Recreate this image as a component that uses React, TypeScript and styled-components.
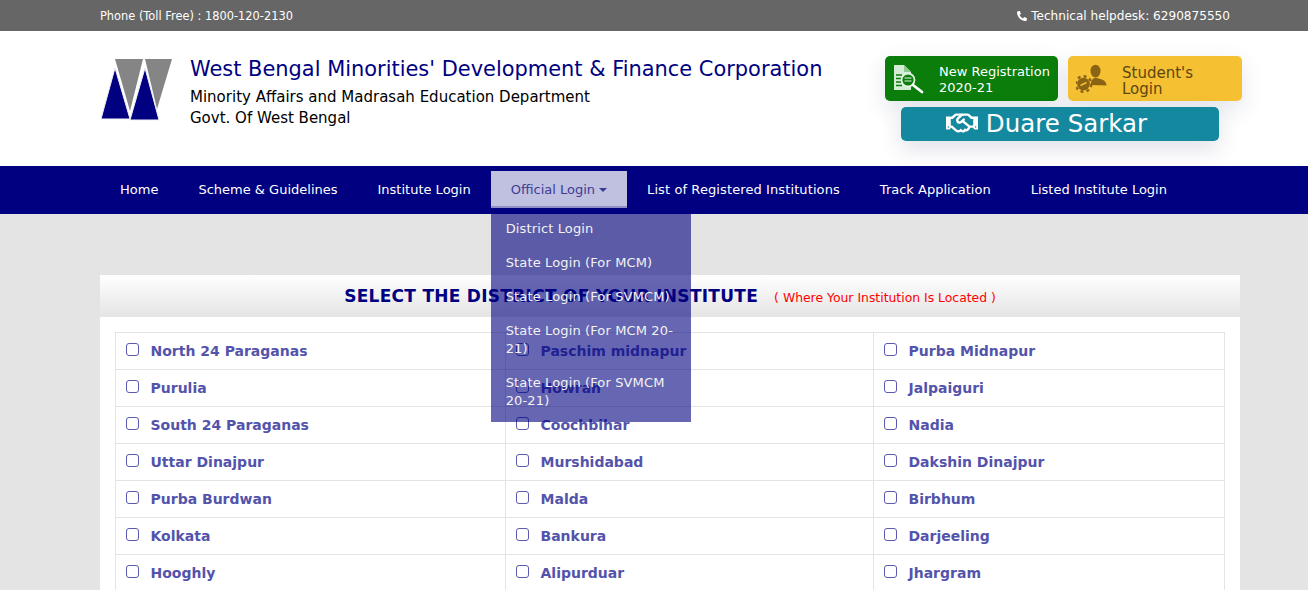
import styled, { createGlobalStyle } from "styled-components";
import { FaPhone, FaRegHandshake } from "react-icons/fa";

const GlobalStyle = createGlobalStyle`
    html, body {
        margin: 0;
        padding: 0;
        background: #e4e4e4;
        font-family: "DejaVu Sans", Verdana, sans-serif;
    }
    * {
        box-sizing: border-box;
    }
`;

const Page = styled.div`
    height: 590px;
    overflow: hidden;
`;

const Container = styled.div`
    width: 1140px;
    margin-left: 100px;
`;

const TopBar = styled.div`
    height: 31px;
    background: #666666;
    color: #ffffff;
    font-size: 11.4px;
`;

const TopRow = styled(Container)`
    height: 31px;
    display: flex;
    justify-content: space-between;
    align-items: center;
    padding-right: 10px;
`;

const Helpdesk = styled.span`
    display: flex;
    align-items: center;
    gap: 4px;
    font-size: 12.1px;
    svg {
        width: 10px;
        height: 10px;
    }
`;

const Header = styled.header`
    height: 135px;
    background: #ffffff;
`;

const HeaderRow = styled(Container)`
    height: 135px;
    display: flex;
    justify-content: space-between;
`;

const Brand = styled.div`
    display: flex;
    align-items: flex-start;
    gap: 17px;
    padding-top: 24px;
    svg {
        margin-top: 4px;
    }
`;

const BrandTitle = styled.h1`
    margin: 0 0 4px;
    font-size: 20.93px;
    line-height: 28px;
    font-weight: 400;
    color: #000080;
    white-space: nowrap;
`;

const BrandLine = styled.p`
    margin: 0;
    font-size: 15px;
    line-height: 21px;
    color: #000000;
`;

const Actions = styled.div`
    width: 357px;
    margin-right: -2px;
    padding-top: 25px;
    display: flex;
    flex-direction: column;
    align-items: center;
    gap: 6px;
`;

const ActionRow = styled.div`
    width: 100%;
    display: flex;
    justify-content: space-between;
`;

const ActionButton = styled.a<{ $bg: string; $color: string; $width: number }>`
    width: ${(props) => props.$width}px;
    height: 45px;
    display: flex;
    align-items: center;
    gap: 15px;
    padding-left: 8px;
    border-radius: 5px;
    background: ${(props) => props.$bg};
    color: ${(props) => props.$color};
    box-shadow: 0 8px 22px rgba(60, 70, 110, 0.14);
`;

const ActionLabel = styled.span<{ $size: number; $drop: number }>`
    padding-top: ${(props) => props.$drop}px;
    font-size: ${(props) => props.$size}px;
    line-height: 16px;
`;

const DuareButton = styled.a`
    width: 318px;
    height: 34px;
    margin-right: 7px;
    padding: 0 27px 2px 0;
    display: flex;
    align-items: center;
    justify-content: center;
    gap: 8px;
    border-radius: 5px;
    background: #13889f;
    color: #ffffff;
    font-size: 24.5px;
    box-shadow: 0 8px 22px rgba(60, 70, 110, 0.16);
    svg {
        width: 32px;
        height: 32px;
    }
`;

const Nav = styled.nav`
    height: 48px;
    background: #000080;
`;

const NavList = styled.ul`
    list-style: none;
    margin: 0 0 0 100px;
    padding: 5px 0 0;
    width: 1140px;
    display: flex;
    align-items: flex-start;
`;

const NavItem = styled.li<{ $active?: boolean; $spread?: number }>`
    position: relative;
    height: 37px;
    padding: 1px 20px 0;
    display: flex;
    align-items: center;
    gap: 4px;
    font-size: 13px;
    letter-spacing: ${(props) => props.$spread ?? 0}px;
    white-space: nowrap;
    color: ${(props) => (props.$active ? "#3c3c96" : "#ffffff")};
    background: ${(props) => (props.$active ? "#c0c0e0" : "transparent")};
    border-bottom: 2px solid ${(props) => (props.$active ? "#8f8fc6" : "transparent")};
`;

const Caret = styled.i`
    width: 0;
    height: 0;
    margin-top: 2px;
    border-left: 4px solid transparent;
    border-right: 4px solid transparent;
    border-top: 4px solid #3c3c96;
`;

const Dropdown = styled.ul`
    position: absolute;
    z-index: 5;
    top: 37px;
    left: 0;
    width: 200px;
    margin: 0;
    padding: 4px 0 4px;
    list-style: none;
    background: rgba(0, 0, 128, 0.6);
    white-space: normal;
`;

const DropdownItem = styled.li`
    padding: 8px 15px;
    font-size: 13px;
    line-height: 18px;
    letter-spacing: 0.13px;
    color: #f2f2f2;
`;

const Main = styled(Container)`
    padding-top: 61px;
`;

const Card = styled.section`
    background: #ffffff;
    padding-bottom: 20px;
`;

const CardHead = styled.div`
    height: 42px;
    display: flex;
    align-items: center;
    justify-content: center;
    gap: 16px;
    background: linear-gradient(#ffffff, #e4e4e4);
`;

const CardTitle = styled.h2`
    margin: 0;
    font-size: 17px;
    font-weight: 700;
    letter-spacing: 0.28px;
    color: #000080;
`;

const CardNote = styled.span`
    margin-top: 2px;
    font-size: 12.4px;
    color: #ff0000;
`;

const DistrictTable = styled.table`
    table-layout: fixed;
    width: 1109px;
    margin: 15px 15px 0;
    border-collapse: collapse;
`;

const Cell = styled.td`
    height: 37px;
    padding: 0 10px;
    border: 1px solid #e4e4e4;
`;

const DistrictLabel = styled.label`
    display: flex;
    align-items: center;
    gap: 11.5px;
    font-size: 14px;
    font-weight: 700;
    color: #5353ab;
`;

const Check = styled.input`
    appearance: none;
    width: 13px;
    height: 13px;
    margin: -3px 0 0;
    flex: none;
    background: #ffffff;
    border: 1px solid #5a5ab0;
    border-radius: 3px;
`;

function Logo() {
    return (
        <svg width="73" height="64" viewBox="0 0 73 64" aria-hidden="true">
            <polygon points="15,0 43,0 30,52" fill="#858585" />
            <polygon points="45,0 72,0 57,50" fill="#858585" />
            <polygon points="1,60 30,60 15,9" fill="#000080" stroke="#f0f0f6" strokeWidth="1" />
            <polygon points="30,61 59,61 45,9" fill="#000080" stroke="#f0f0f6" strokeWidth="1" />
        </svg>
    );
}

function RegistrationIcon() {
    return (
        <svg width="31" height="31" viewBox="0 0 31 31" aria-hidden="true">
            <path d="M1 2h10l7 7v18H1z" fill="#d3ecd3" />
            <path d="M11 2v7h7z" fill="#8fc88f" />
            <path d="M3 12h6M3 15.500h6M3 19h6M3 22.500h6" stroke="#0a7d0a" strokeWidth="1.300" />
            <circle cx="15" cy="17" r="6.500" fill="#0a7d0a" stroke="#e3f3e3" strokeWidth="1.800" />
            <path d="M11.500 15h7M11.500 18h7" stroke="#e3f3e3" strokeWidth="1.200" />
            <path d="M20 22l9 7" stroke="#ffffff" strokeWidth="2.800" strokeLinecap="round" />
        </svg>
    );
}

function StudentIcon() {
    return (
        <svg width="31" height="30" viewBox="0 0 31 30" fill="#8a6414" aria-hidden="true">
            <ellipse cx="19.500" cy="7" rx="5" ry="6.300" />
            <path d="M15 21c-.5-4 1.500-6.500 4.500-7.500 3 1 7 1.500 9 3.500 1.500 1.500 2 3 2 4.500z" />
            <circle cx="7.500" cy="20" r="6.300" />
            <circle cx="7.500" cy="20" r="7.800" fill="none" stroke="#8a6414" strokeWidth="2.400" strokeDasharray="3 3.100" />
            <path d="M4.500 21.500l6-3" stroke="#f5c132" strokeWidth="1.800" />
        </svg>
    );
}

const navLinks = ["Home", "Scheme & Guidelines", "Institute Login"];

const officialLogins = [
    "District Login",
    "State Login (For MCM)",
    "State Login (For SVMCM)",
    "State Login (For MCM 20-21)",
    "State Login (For SVMCM 20-21)",
];

const districts = [
    ["North 24 Paraganas", "Paschim midnapur", "Purba Midnapur"],
    ["Purulia", "Howrah", "Jalpaiguri"],
    ["South 24 Paraganas", "Coochbihar", "Nadia"],
    ["Uttar Dinajpur", "Murshidabad", "Dakshin Dinajpur"],
    ["Purba Burdwan", "Malda", "Birbhum"],
    ["Kolkata", "Bankura", "Darjeeling"],
    ["Hooghly", "Alipurduar", "Jhargram"],
];

function App() {
    return (
        <Page>
            <GlobalStyle />
            <TopBar>
                <TopRow>
                    <span>Phone (Toll Free) : 1800-120-2130</span>
                    <Helpdesk>
                        <FaPhone style={{ transform: "scaleX(-1)" }} />
                        Technical helpdesk: 6290875550
                    </Helpdesk>
                </TopRow>
            </TopBar>
            <Header>
                <HeaderRow>
                    <Brand>
                        <Logo />
                        <div>
                            <BrandTitle>West Bengal Minorities' Development &amp; Finance Corporation</BrandTitle>
                            <BrandLine>Minority Affairs and Madrasah Education Department</BrandLine>
                            <BrandLine>Govt. Of West Bengal</BrandLine>
                        </div>
                    </Brand>
                    <Actions>
                        <ActionRow>
                            <ActionButton $bg="#0a7d0a" $color="#ffffff" $width={173}>
                                <RegistrationIcon />
                                <ActionLabel $size={13} $drop={2}>New Registration<br />2020-21</ActionLabel>
                            </ActionButton>
                            <ActionButton $bg="#f5c132" $color="#5c4510" $width={174}>
                                <StudentIcon />
                                <ActionLabel $size={15} $drop={4}>Student's<br />Login</ActionLabel>
                            </ActionButton>
                        </ActionRow>
                        <DuareButton>
                            <FaRegHandshake />
                            Duare Sarkar
                        </DuareButton>
                    </Actions>
                </HeaderRow>
            </Header>
            <Nav>
                <NavList>
                    {navLinks.map((link) => (
                        <NavItem key={link}>{link}</NavItem>
                    ))}
                    <NavItem $active>
                        Official Login <Caret />
                        <Dropdown>
                            {officialLogins.map((login) => (
                                <DropdownItem key={login}>{login}</DropdownItem>
                            ))}
                        </Dropdown>
                    </NavItem>
                    <NavItem $spread={0.1}>List of Registered Institutions</NavItem>
                    <NavItem>Track Application</NavItem>
                    <NavItem>Listed Institute Login</NavItem>
                </NavList>
            </Nav>
            <Main>
                <Card>
                    <CardHead>
                        <CardTitle>SELECT THE DISTRICT OF YOUR INSTITUTE</CardTitle>
                        <CardNote>( Where Your Institution Is Located )</CardNote>
                    </CardHead>
                    <DistrictTable>
                        <colgroup>
                            <col width="390" />
                            <col width="368" />
                            <col width="351" />
                        </colgroup>
                        <tbody>
                            {districts.map((row) => (
                                <tr key={row[0]}>
                                    {row.map((name) => (
                                        <Cell key={name}>
                                            <DistrictLabel>
                                                <Check type="checkbox" />
                                                {name}
                                            </DistrictLabel>
                                        </Cell>
                                    ))}
                                </tr>
                            ))}
                        </tbody>
                    </DistrictTable>
                </Card>
            </Main>
        </Page>
    );
}

export default App;
